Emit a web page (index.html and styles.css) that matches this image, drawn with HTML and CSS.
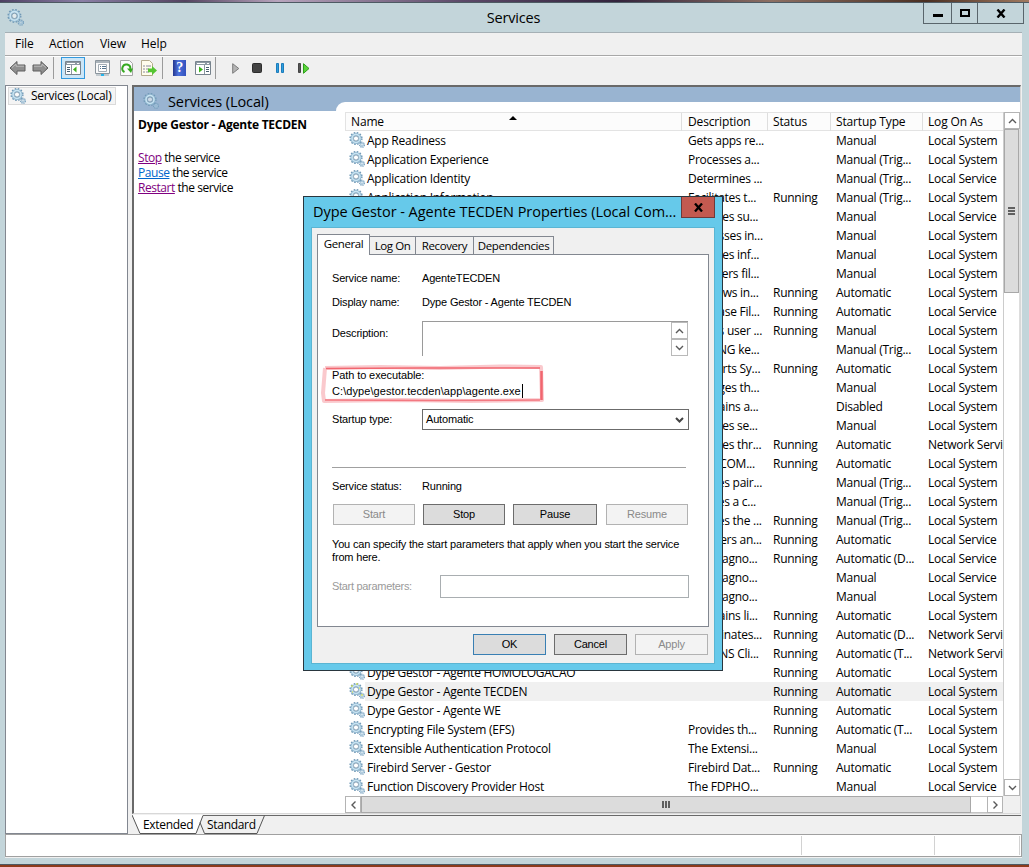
FILE: index.html
```html
<!DOCTYPE html>
<html lang="en">
<head>
<meta charset="utf-8">
<title>Services</title>
<link rel="stylesheet" href="styles.css">
</head>
<body>
<svg class="defs" width="0" height="0">
  <defs>
    <symbol id="gear" viewBox="0 0 16 16">
      <circle cx="7" cy="6.5" r="5.8" fill="none" stroke="#7098b5" stroke-width="1.6" stroke-dasharray="1.6 1.44"/>
      <circle cx="7" cy="6.5" r="4.1" fill="none" stroke="#8fb6cf" stroke-width="2.8"/>
      <circle cx="7" cy="6.5" r="4" fill="none" stroke="#c9e4f2" stroke-width="1.5"/>
      <circle cx="7" cy="6.5" r="2.5" fill="#fff" fill-opacity=".5" stroke="#7592a8" stroke-width=".8"/>
      <circle cx="13" cy="12.8" r="2.4" fill="none" stroke="#769fbd" stroke-width="1.3" stroke-dasharray="1.2 .7"/>
      <circle cx="13" cy="12.8" r="1.3" fill="none" stroke="#9dbfd6" stroke-width="1.1"/>
    </symbol>
    <symbol id="up" viewBox="0 0 9 6"><path d="M1 5 4.5 1.5 8 5" fill="none" stroke="#5a5a5a" stroke-width="1.4"/></symbol>
    <symbol id="arrow" viewBox="0 0 17 16"><path d="M1 8 8 1.5V5h8v6H8v3.5z" fill="#8f8f8f" stroke="#5f5f5f"/><path d="M3 7.6 7 4v2.2h8" fill="none" stroke="#bdbdbd"/></symbol>
  </defs>
</svg>
<div class="window">
  <header class="titlebar">
    <svg class="app-icon" width="17" height="17"><use href="#gear"/></svg>
    <h1>Services</h1>
    <div class="caption">
      <span class="cap min"><svg width="10" height="10"><path d="M0 6h10v3H0z"/></svg></span>
      <span class="cap max"><svg width="10" height="8"><path d="M1 1h8v6H1z" fill="none" stroke="#000" stroke-width="2"/></svg></span>
      <span class="cap close"><svg width="10" height="9"><path d="M1.5 .5 8.5 8.5M8.5 .5 1.5 8.5" stroke="#000" stroke-width="2.4"/></svg></span>
    </div>
  </header>
  <div class="client">
    <nav class="menubar"><span>File</span><span>Action</span><span>View</span><span>Help</span></nav>
    <div class="toolbar">
      <svg class="t-back" width="17" height="16"><use href="#arrow"/></svg>
      <svg class="t-fwd" width="17" height="16"><use href="#arrow"/></svg>
      <i class="sep s1"></i>
      <span class="toggled"><svg width="16" height="14"><path d="M.5.5h15v13H.5z" fill="#fff" stroke="#77838d"/><path d="M1 1h14v3H1z" fill="#8d99a3"/><path d="M2 2.5h8M12 2.5h2" stroke="#fff"/><path d="M6.5 4v9" stroke="#8d99a3"/><path d="M2 6.5h3M2 8.5h3M2 10.5h3" stroke="#4a5f70"/><path d="M11.5 5.5v6L8 8.5z" fill="#3bb31d"/></svg></span>
      <svg class="t-prop" width="15" height="16"><path d="M.5.5h14v13H.5z" fill="#fafafa" stroke="#8b959d"/><path d="M1 2h13" stroke="#aab3ba" stroke-width="2"/><path d="M3.5 4.5h8v7h-8z" fill="#fff" stroke="#a4adb5"/><path d="M5 6.5h1M7 6.5h4M5 8.5h1M7 8.5h4" stroke="#56748e"/><path d="M1 15h13" stroke="#c2cacf" stroke-width="2"/><path d="M6 15h3" stroke="#25b4ea" stroke-width="2"/></svg>
      <svg class="t-refresh" width="13" height="16"><path d="M.5.5h9l3 3v12H.5z" fill="#fbfbfb" stroke="#a5a5a5"/><path d="M4.5 12A4 4 0 1 1 10.3 8.8" fill="none" stroke="#35a81f" stroke-width="2"/><path d="M7 8.5h6l-2 4.5z" fill="#35a81f"/></svg>
      <svg class="t-export" width="16" height="16"><path d="M.5.5h8l3 3v12H.5z" fill="#fffdec" stroke="#b3aa8d"/><path d="M2 6h2M5 6h5M2 9h2M5 9h3M2 12h2M5 12h3" stroke="#8a8aa0"/><path d="M7 8.5h4V6l5 4.5-5 4.5v-2.7H7z" fill="#55c531"/></svg>
      <i class="sep s2"></i>
      <span class="help">?</span>
      <svg class="t-pane" width="16" height="14"><path d="M.5.5h15v13H.5z" fill="#fff" stroke="#77838d"/><path d="M1 1h14v3H1z" fill="#8d99a3"/><path d="M2 2.5h8M12 2.5h2" stroke="#fff"/><path d="M9.5 4v9" stroke="#8d99a3"/><path d="M11 6.5h3M11 8.5h3M11 10.5h3" stroke="#4a5f70"/><path d="M4 5.5v6L8 8.5z" fill="#3bb31d"/></svg>
      <i class="sep s3"></i>
      <svg class="t-play" width="8" height="11"><path d="M.7.7v9.6L6.8 5.5z" fill="#b4b4b4" stroke="#7d7d7d"/></svg>
      <svg class="t-stop" width="10" height="10"><rect x=".5" y=".5" width="9" height="9" rx="1" fill="#444" stroke="#2d2d2d"/></svg>
      <svg class="t-pause" width="8" height="10"><path d="M.5.5h2v9h-2zM5.5.5h2v9h-2z" fill="#2f9fdd" stroke="#1c7cbc"/></svg>
      <svg class="t-restart" width="12" height="11"><path d="M.5.5h2v9h-2z" fill="#555" stroke="#444"/><path d="M5.5.7v9.6L11 5.5z" fill="#5ad33a" stroke="#2da01a"/></svg>
    </div>
    <div class="panes">
      <aside class="tree"><div class="node"><svg width="16" height="16"><use href="#gear"/></svg><span>Services (Local)</span></div></aside>
      <main class="result">
        <section class="view">
          <div class="banner"><svg width="16" height="16"><use href="#gear"/></svg><span>Services (Local)</span></div>
          <div class="split">
            <div class="info">
              <h2>Dype Gestor - Agente TECDEN</h2>
              <p><a class="visited">Stop</a> the service</p>
              <p><a>Pause</a> the service</p>
              <p><a class="visited">Restart</a> the service</p>
            </div>
            <div class="listwrap">
              <div class="grid">
                <div class="list">
                  <div class="row head"><span>Name<i class="sort"></i></span><span>Description</span><span>Status</span><span>Startup Type</span><span>Log On As</span></div>
                  <div id="rows"></div>
                </div>
                <div class="vscroll"><b><svg width="9" height="6"><use href="#up"/></svg></b><div class="thumb"><i></i><i></i><i></i></div><b class="down"><svg width="9" height="6"><use href="#up"/></svg></b></div>
              </div>
              <div class="hscroll"><b class="left"><svg width="9" height="6"><use href="#up"/></svg></b><div class="thumb"><i></i><i></i><i></i></div><div class="track"></div><b class="right"><svg width="9" height="6"><use href="#up"/></svg></b></div>
            </div>
          </div>
        </section>
        <div class="viewtabs">
          <svg width="889" height="19"><path d="M0 0H71L64 18H8z" fill="#fff"/><path d="M71 .5H889" stroke="#696969"/><path d="M0 0 8 18.5H64L71 .5M68 7.5 72.5 18.5H125L132.5 .5" fill="none" stroke="#555"/></svg>
          <span class="vt1">Extended</span><span class="vt2">Standard</span>
        </div>
      </main>
    </div>
    <footer class="status"><span></span><span></span><span></span></footer>
  </div>
</div>

<div class="dialog">
  <div class="dtitle"><span>Dype Gestor - Agente TECDEN Properties (Local Com...</span><b><svg width="9" height="9"><path d="M1 .5 8 8.5M8 .5 1 8.5" stroke="#000" stroke-width="2.3"/></svg></b></div>
  <div class="dbody">
    <div class="tabs"><span class="on">General</span><span class="logon">Log On</span><span class="recov">Recovery</span><span class="deps">Dependencies</span></div>
    <div class="sheet">
      <div class="field f1"><label>Service name:</label><span>AgenteTECDEN</span></div>
      <div class="field f2"><label>Display name:</label><span>Dype Gestor - Agente TECDEN</span></div>
      <div class="field f3"><label>Description:</label><div class="desc"><b><svg width="9" height="6"><use href="#up"/></svg></b><b class="down"><svg width="9" height="6"><use href="#up"/></svg></b></div></div>
      <div class="path"><div>Path to executable:</div><div class="exe">C:\dype\gestor.tecden\app\agente.exe</div>
        <svg class="marker" width="228" height="42"><g fill="none" stroke="#ef4d58" stroke-linejoin="round"><path d="M5 5 60 4 120 5 180 3.500 221 4 222 37 150 38 80 37 4 38 3 30 5 5" stroke-width="4" opacity=".3"/><path d="M6 5.500 100 5 220 5" stroke-width="1.500" opacity=".8"/><path d="M221.500 8V37" stroke-width="2.500" opacity=".8"/><path d="M220 37 120 37.500 5 37" stroke-width="1.500" opacity=".65"/></g></svg>
      </div>
      <div class="field f4"><label>Startup type:</label><div class="select">Automatic<svg width="9" height="6"><path d="M1 1 4.5 4.5 8 1" fill="none" stroke="#444" stroke-width="2"/></svg></div></div>
      <hr>
      <div class="field f5"><label>Service status:</label><span>Running</span></div>
      <div class="actions"><button class="off">Start</button><button>Stop</button><button class="wide">Pause</button><button class="off">Resume</button></div>
      <p class="hint">You can specify the start parameters that apply when you start the service<br>from here.</p>
      <div class="field f6"><label>Start parameters:</label><div class="input"></div></div>
    </div>
    <div class="dbuttons"><button class="default">OK</button><button>Cancel</button><button class="off">Apply</button></div>
  </div>
</div>
<script src="rows.js"></script>
</body>
</html>
```
FILE: rows.js
```js
// name, description, status, startup type, log on as
const S = "Local System", V = "Local Service", N = "Network Service", R = "Running";
const M = "Manual", MT = "Manual (Trig...", A = "Automatic";
const services = [
  ["App Readiness", "Gets apps re...", "", M, S],
  ["Application Experience", "Processes a...", "", MT, S],
  ["Application Identity", "Determines ...", "", MT, V],
  ["Application Information", "Facilitates t...", R, MT, S],
  ["", "Provides su...", "", M, V],
  ["", "Processes in...", "", M, S],
  ["", "Provides inf...", "", M, S],
  ["", "Transfers fil...", "", M, S],
  ["", "Windows in...", R, A, S],
  ["", "The Base Fil...", R, A, V],
  ["", "Copies user ...", R, M, S],
  ["", "The CNG ke...", "", MT, S],
  ["", "Supports Sy...", R, A, S],
  ["", "Manages th...", "", M, S],
  ["", "Maintains a...", "", "Disabled", S],
  ["", "Provides se...", "", M, S],
  ["", "Provides thr...", R, A, N],
  ["", "The DCOM...", R, A, S],
  ["", "Enables pair...", "", MT, S],
  ["", "Enables a c...", "", MT, S],
  ["", "Enables the ...", R, MT, S],
  ["", "Registers an...", R, A, V],
  ["", "The Diagno...", R, "Automatic (D...", V],
  ["", "The Diagno...", "", M, V],
  ["", "The Diagno...", "", M, S],
  ["", "Maintains li...", R, A, S],
  ["", "Coordinates...", R, "Automatic (D...", N],
  ["", "The DNS Cli...", R, "Automatic (T...", N],
  ["Dype Gestor - Agente HOMOLOGACAO", "", R, A, S],
  ["Dype Gestor - Agente TECDEN", "", R, A, S],
  ["Dype Gestor - Agente WE", "", R, A, S],
  ["Encrypting File System (EFS)", "Provides th...", R, "Automatic (T...", S],
  ["Extensible Authentication Protocol", "The Extensi...", "", M, S],
  ["Firebird Server - Gestor", "Firebird Dat...", R, A, S],
  ["Function Discovery Provider Host", "The FDPHO...", "", M, V]
];
const gear = sel => '<svg width="16" height="16"><use href="#gear"/>' +
  (sel ? '<path d="M2 3h2M7 1h2M3 9h1M10 5h1M12 12h2" stroke="#e3ea2c"/>' : "") + "</svg>";
document.getElementById("rows").innerHTML = services.map((cells, i) =>
  `<div class="row${i === 29 ? " selected" : ""}">` +
  cells.map((c, k) => `<span>${k === 0 ? gear(i === 29) : ""}${c}</span>`).join("") + "</div>"
).join("");
```
FILE: styles.css
```css
* { box-sizing: border-box; }
body { margin: 0; width: 1029px; height: 867px; overflow: hidden; padding: 2px 0;
  background: linear-gradient(90deg, #4d3f61, #8a7fa5 8%, #54435f 18%, #b8a5bd 27%, #5b4968 45%, #33243c 60%, #8c6f62 75%, #4a2f22 90%, #a07a60) top / 100% 3px no-repeat, #8e3b1d;
  font: 12px/19px "Open Sans", "Noto Sans", sans-serif; letter-spacing: -.26px; color: #000; }
.defs { position: absolute; }
h1, h2, p { margin: 0; font-weight: normal; }
svg { display: block; flex: none; }
.window { height: 863px; background: #c3d5da; border-top: 1px solid #4d5a63; border-bottom: 1px solid #4d5a63; }

.titlebar { height: 29px; display: flex; justify-content: flex-end; position: relative; }
.app-icon { position: absolute; left: 7px; top: 6px; }
.titlebar h1 { position: absolute; left: 0; right: 2px; top: 4px; text-align: center; font-size: 14.5px; line-height: 22px; letter-spacing: -.15px; }
.caption { display: flex; height: 21px; width: 101px; margin-right: 5px; border: 1px solid #59656b; border-top: 0; }
.cap { display: flex; align-items: center; justify-content: center; border-right: 1px solid #59656b; }
.cap.min { width: 28px; } .cap.max { width: 26px; } .cap.close { flex: 1; border: 0; }

.client { margin: 0 7px 0 5px; height: 826px; background: #f0f0f0; border-top: 1px solid #a5b0b5; }
.menubar { height: 23px; border-bottom: 1px solid #a8a8a8; display: flex; padding-left: 10px; line-height: 22px; letter-spacing: -.05px; }
.menubar span:nth-child(1) { width: 34px; } .menubar span:nth-child(2) { width: 51px; } .menubar span:nth-child(3) { width: 41px; }
.toolbar { height: 29px; display: flex; align-items: center; padding: 0 0 6px 4px; border-top: 1px solid #fff; }
.t-fwd { transform: scaleX(-1); margin-left: 6px; }
.sep { width: 1px; height: 22px; background: #9b9b9b; }
.s1 { margin: 0 7px 0 4px; }
.toggled { width: 24px; height: 22px; border: 1px solid #3399dd; background: #cce6f7; display: grid; place-items: center; }
.t-prop { margin-left: 10px; }
.t-refresh { margin-left: 10px; }
.t-export { margin-left: 8px; }
.s2 { margin: 0 10px 0 5px; }
.help { width: 13px; height: 16px; background: linear-gradient(90deg, #24368e, #4d72dc 40%, #3350bd); color: #fff; font: bold 14px/16px "Liberation Serif", serif; text-align: center; }
.t-pane { margin-left: 9px; }
.s3 { margin: 0 16px 0 4px; }
.t-stop { margin-left: 12px; } .t-pause { margin-left: 14px; } .t-restart { margin-left: 14px; }

.panes { display: flex; height: 749px; }
.tree { width: 123px; background: #fff; border: 1px solid #828790; padding: 1px 2px; }
.node { width: 108px; height: 18px; border: 1px solid #dadada; background: #f4f4f4; display: flex; align-items: center; padding-left: 1px; line-height: 16px; }
.node span { margin-left: 5px; }
.result { margin-left: 4px; width: 889px; display: flex; flex-direction: column; }
.view { height: 729px; margin-bottom: 1px; background: #fff; border: solid #696969; border-width: 2px 0 0 2px; border-right: 1px solid #d8d8d8; border-bottom: 1px solid #d8d8d8; overflow: hidden; }
.banner { height: 24px; background: #99b4d1; display: flex; padding: 5px 0 0 9px; font-size: 14.5px; line-height: 20px; letter-spacing: -.1px; }
.banner svg { margin-top: 1px; }
.banner span { margin-left: 9px; }
.split { display: flex; height: 702px; }
.info { width: 202px; padding: 6px 0 0 4px; line-height: 15px; letter-spacing: -.45px; }
.info h2 { font-size: 12px; font-weight: bold; letter-spacing: -.25px; line-height: 15px; margin-bottom: 18px; white-space: nowrap; }
.info a { color: #0066cc; text-decoration: underline; } .info a.visited { color: #800080; }
.listwrap { margin-top: -9px; height: 711px; width: 684px; background: #fff; border-top-left-radius: 9px; padding: 10px 0 0 9px; }
.grid { display: flex; height: 684px; }
.list { width: 658px; overflow: hidden; }
.row { display: grid; grid-template-columns: 337px 85px 63px 92px 110px; height: 19px; white-space: nowrap; }
.row span { padding-left: 6px; line-height: 19px; }
.row span:first-child { display: flex; padding-left: 4px; }
.row svg { margin: 1px 2px 0 0; }
.row.selected { background: linear-gradient(90deg, #fff 20px, #f0f0f0 20px); }
.row.head { background: #fcfcfc; border: 1px solid #e3e3e3; border-right: 0; }
.row.head span { border-right: 1px solid #dedede; position: relative; padding-left: 5px; line-height: 18px; letter-spacing: -.15px; }
.row.head span:first-child { width: 336px; }
.sort { position: absolute; left: 163px; top: 3px; border: solid transparent; border-width: 0 4px 4px; border-bottom-color: #000; }
.vscroll { width: 17px; display: flex; flex-direction: column; border-left: 1px solid #ccc; border-right: 1px solid #ddd; }
.vscroll b, .hscroll b { width: 16px; height: 17px; border: 1px solid #b4b4b4; background: #fff; display: grid; place-items: center; flex: none; }
.down svg { transform: rotate(180deg); } .left svg { transform: rotate(-90deg); } .right svg { transform: rotate(90deg); }
.vscroll .down { margin-top: auto; }
.thumb { background: #dcdcdc; border: 1px solid #a8a8a8; display: flex; align-items: center; justify-content: center; gap: 1px; }
.vscroll .thumb { height: 164px; flex-direction: column; }
.vscroll .thumb i { width: 7px; height: 2px; background: #606060; }
.hscroll { width: 675px; height: 17px; background: #f0f0f0; display: flex; }
.hscroll .thumb { width: 610px; }
.hscroll .thumb i { height: 7px; width: 2px; background: #606060; }
.hscroll .track { width: 16px; background: #fff; border: solid #c4c4c4; border-width: 1px 0; }
.viewtabs { height: 19px; position: relative; }
.viewtabs span { position: absolute; top: 0; letter-spacing: -.3px; }
.vt1 { left: 11px; } .vt2 { left: 75px; }
.status { height: 23px; background: #fff; border: 1px solid #a0a0a0; display: flex; padding: 1px 0; }
.status span:nth-child(1) { width: 796px; } .status span:nth-child(2) { width: 133px; } .status span:nth-child(3) { width: 85px; }
.status span { border-right: 1px solid #d2d2d2; }

.dialog { position: absolute; left: 303px; top: 196px; width: 420px; height: 475px; background: #66c9ea; border: 1px solid #29363e; padding: 0 7px; font: 11px/13px "Liberation Sans", Arial, sans-serif; letter-spacing: -.17px; }
.dtitle { height: 30px; display: flex; font: 14.5px/30px "Open Sans", sans-serif; white-space: nowrap; letter-spacing: -.04px; padding-left: 2px; }
.dtitle span { width: 370px; }
.dtitle b { width: 34px; height: 21px; background: #c35a50; border: 1px solid #6e3a3a; border-top: 0; display: grid; place-items: center; flex: none; }
.dtitle b { margin-left: 2px; }
.dbody { height: 437px; background: #f0f0f0; border: 1px solid #5ab5d3; padding: 6px 5px 0; width: 404px; }
.tabs { display: flex; align-items: flex-end; height: 21px; position: relative; margin-bottom: -1px; font: 11.5px/17px "Open Sans", sans-serif; letter-spacing: -.4px; }
.tabs span { height: 19px; border: 1px solid #828790; border-right-width: 0; background: #f0f0f0; text-align: center; }
.tabs .on { width: 53px; height: 21px; background: #fff; border-right-width: 1px; border-bottom: 0; line-height: 18px; }
.tabs .logon { width: 45px; border-left: 0; } .tabs .recov { width: 58px; } .tabs .deps { width: 81px; border-right-width: 1px; }
.sheet { width: 392px; height: 373px; background: #fff; border: 1px solid #828790; padding: 17px 0 0 14px; }
.field { display: flex; white-space: nowrap; }
.field label { width: 90px; flex: none; }
.f1 { height: 24px; } .f2 { height: 25px; }
.f3 label { padding-top: 6px; }
.desc { width: 266px; height: 35px; border: solid #9a9a9a; border-width: 1px 0 0 1px; padding-left: 248px; }
.desc b { display: grid; place-items: center; width: 17px; height: 17px; border: 1px solid #b9b9b9; }
.path { position: relative; padding-top: 12px; line-height: 14px; letter-spacing: -.1px; }
.exe { margin-top: 2px; width: 191px; border-right: 1px solid #000; white-space: nowrap; letter-spacing: .08px; }
.marker { position: absolute; left: -12px; top: 7px; }
.f4 { margin-top: 11px; } .f4 label { padding-top: 4px; }
.select { width: 267px; height: 21px; border: 1px solid #6b6b6b; display: flex; justify-content: space-between; align-items: center; padding: 0 4px 0 3px; }
hr { width: 354px; margin: 37px 0 0; border: 0; border-top: 1px solid #a0a0a0; }
.f5 { margin-top: 12px; }
button { font: inherit; letter-spacing: inherit; padding: 0; height: 21px; border: 1px solid #6c6c6c; background: #dcdcdc; color: #000; }
button.off { background: #f3f3f3; border-color: #b2b2b2; color: #8a8a8a; }
button.default { border-color: #397fb3; }
.actions { display: flex; gap: 8px; margin: 11px 0 0 1px; }
.actions button { width: 82px; } .actions .wide { width: 84px; } .actions button:last-child { margin-left: 1px; }
.hint { margin-top: 13px; white-space: nowrap; }
.f6 { margin-top: 11px; color: #9a9a9a; } .f6 label { width: 108px; padding-top: 5px; letter-spacing: -.3px; }
.input { width: 249px; height: 23px; border: 1px solid #a9aeb1; }
.dbuttons { display: flex; gap: 8px; justify-content: flex-end; padding: 7px 1px 0 0; }
.dbuttons button { width: 73px; }
```
